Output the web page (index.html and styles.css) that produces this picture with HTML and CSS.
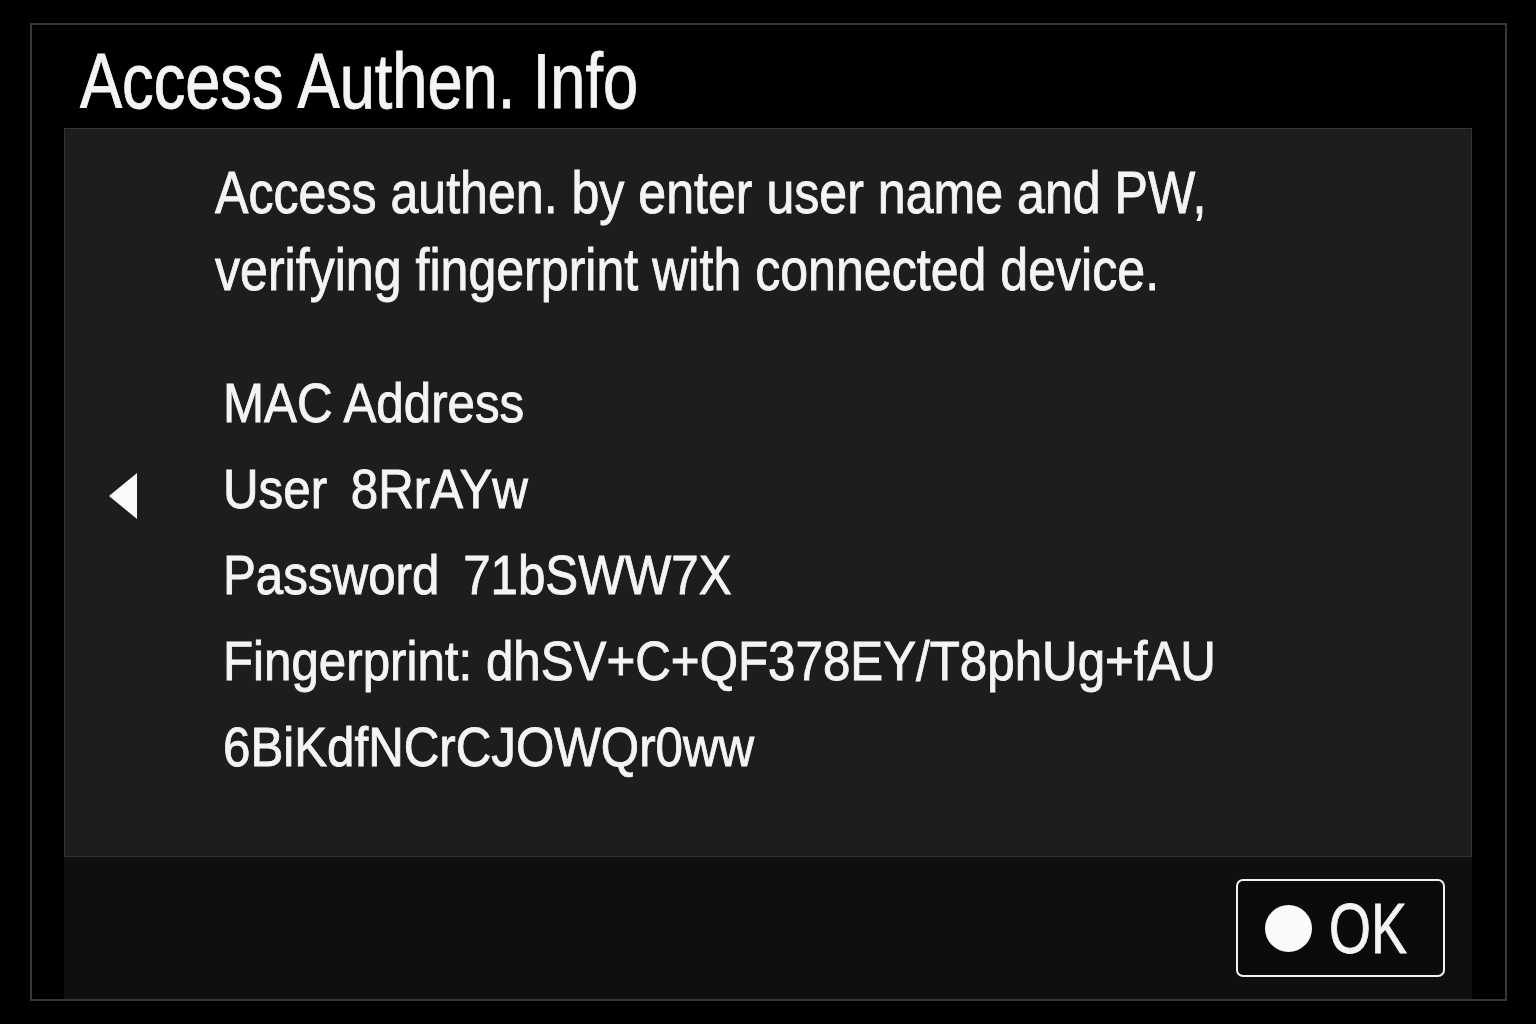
FILE: index.html
```html
<!DOCTYPE html>
<html>
<head>
<meta charset="utf-8">
<link rel="stylesheet" href="styles.css">
</head>
<body>
<div class="frame">
  <div class="title"><span class="title-text">Access Authen. Info</span></div>
  <div class="panel">
    <div class="desc">
      <div class="desc-line"><span class="desc-text">Access authen. by enter user name and PW,</span></div>
      <div class="desc-line"><span class="desc-text">verifying fingerprint with connected device.</span></div>
    </div>
    <div class="list">
      <div class="arrow"></div>
      <div class="row"><span class="row-text">MAC Address</span></div>
      <div class="row"><span class="row-text">User<span class="val">8RrAYw</span></span></div>
      <div class="row"><span class="row-text">Password<span class="val">71bSWW7X</span></span></div>
      <div class="row"><span class="row-text">Fingerprint: dhSV+C+QF378EY/T8phUg+fAU</span></div>
      <div class="row"><span class="row-text">6BiKdfNCrCJOWQr0ww</span></div>
    </div>
  </div>
  <div class="footer">
    <div class="ok-btn"><span class="dot"></span><span class="ok-text">OK</span></div>
  </div>
</div>
</body>
</html>
```

FILE: styles.css
```css
html, body {
  margin: 0;
  padding: 0;
  background: #000;
}
body {
  width: 1536px;
  height: 1024px;
  overflow: hidden;
  font-family: "Liberation Sans", Arial, sans-serif;
  color: #f4f4f4;
  -webkit-text-stroke: 0.9px #f4f4f4;
}
.frame {
  margin-left: 30px;
  margin-top: 23px;
  width: 1477px;
  height: 978px;
  box-sizing: border-box;
  border: 2px solid #383838;
  display: flex;
  flex-direction: column;
  padding: 0 33px 0 32px;
}
.title {
  height: 103px;
  box-sizing: border-box;
  padding-left: 16px;
  padding-top: 18px;
  font-size: 77px;
  line-height: 77px;
  white-space: nowrap;
}
.title-text {
  display: inline-block;
  transform: scaleX(0.82);
  transform-origin: 0 0;
}
.panel {
  height: 729px;
  box-sizing: border-box;
  background: #1d1d1d;
  border: 1px solid #333;
}
.desc {
  padding-left: 150px;
  padding-top: 25px;
  font-size: 60px;
}
.desc-line {
  height: 77px;
  line-height: 77px;
  white-space: nowrap;
}
.desc-text {
  display: inline-block;
  transform: scaleX(0.835);
  transform-origin: 0 0;
}
.list {
  position: relative;
  margin-top: 52px;
  padding-left: 158px;
  font-size: 56px;
}
.row {
  height: 86px;
  line-height: 86px;
  white-space: nowrap;
}
.row-text {
  display: inline-block;
  transform: scaleX(0.88);
  transform-origin: 0 0;
}
.val {
  margin-left: 27px;
}
.arrow {
  position: absolute;
  left: 44px;
  top: 113px;
  width: 0;
  height: 0;
  border-top: 23px solid transparent;
  border-bottom: 23px solid transparent;
  border-right: 28px solid #fafafa;
}
.footer {
  flex: 1;
  background: #0f0f0f;
  display: flex;
  justify-content: flex-end;
  align-items: center;
  padding-right: 27px;
}
.ok-btn {
  width: 209px;
  height: 98px;
  box-sizing: border-box;
  border: 2px solid #f2f2f2;
  border-radius: 7px;
  background: #0b0b0b;
  display: flex;
  align-items: center;
  padding-left: 27px;
  gap: 17px;
}
.dot {
  width: 47px;
  height: 47px;
  border-radius: 50%;
  background: #fafafa;
  flex: none;
}
.ok-text {
  display: inline-block;
  font-size: 71px;
  line-height: 71px;
  transform: scaleX(0.76);
  transform-origin: 0 50%;
}
```
